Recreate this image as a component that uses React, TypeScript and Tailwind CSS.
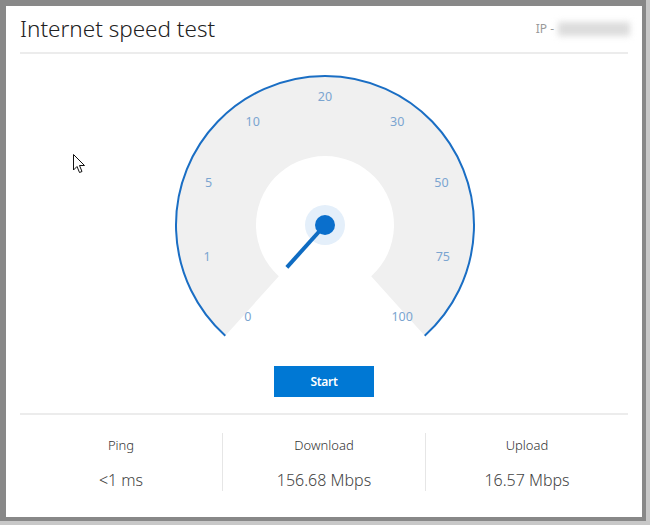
import React from 'react'

const CX = 160
const CY = 164
const R_OUT = 149
const R_IN = 69
const SPAN = 138

const labels = ['0', '1', '5', '10', '20', '30', '50', '75', '100']
// labels sit a little further out near the top than near the ends
const labelRadius = [120, 122, 124, 126, 129, 126, 124, 122, 120]
const LABEL_SPAN = 140

function polar(r: number, deg: number) {
  const a = (deg * Math.PI) / 180
  return { x: CX + r * Math.sin(a), y: CY - r * Math.cos(a) }
}

function Gauge() {
  const oL = polar(R_OUT, -SPAN)
  const oR = polar(R_OUT, SPAN)
  const iL = polar(R_IN, -SPAN)
  const iR = polar(R_IN, SPAN)
  const needle = polar(57, -SPAN)
  const sector = `M ${oL.x} ${oL.y} A ${R_OUT} ${R_OUT} 0 1 1 ${oR.x} ${oR.y} L ${iR.x} ${iR.y} A ${R_IN} ${R_IN} 0 1 0 ${iL.x} ${iL.y} Z`
  const arc = `M ${oL.x} ${oL.y} A ${R_OUT} ${R_OUT} 0 1 1 ${oR.x} ${oR.y}`

  return (
    <svg width="320" height="290" viewBox="0 0 320 290">
      <path d={sector} fill="#f0f0f0" />
      <path d={arc} fill="none" stroke="#1a6ec4" strokeWidth="2" />
      {labels.map((l, i) => {
        const p = polar(labelRadius[i], -LABEL_SPAN + i * ((LABEL_SPAN * 2) / (labels.length - 1)))
        return (
          <text
            key={l}
            x={p.x}
            y={p.y}
            textAnchor="middle"
            dominantBaseline="central"
            fontSize="12.5"
            fill="#7ba5d0"
            fontFamily="'Noto Sans', sans-serif"
          >
            {l}
          </text>
        )
      })}
      <circle cx={CX} cy={CY} r="20" fill="#e4effa" />
      <line x1={CX} y1={CY} x2={needle.x} y2={needle.y} stroke="#0f6cc2" strokeWidth="4" />
      <circle cx={CX} cy={CY} r="10" fill="#0a6fcc" />
    </svg>
  )
}

function Stat({ label, value, last }: { label: string; value: string; last?: boolean }) {
  return (
    <div className={'flex-1 h-[58px] mt-[18px] flex flex-col items-center ' + (last ? '' : 'border-r border-[#e6e6e6]')}>
      <div className="text-[13px] text-[#333] font-light leading-none mt-[6px]">{label}</div>
      <div className="text-[16px] text-[#444] font-light leading-none mt-[20px]">{value}</div>
    </div>
  )
}

export default function App() {
  return (
    <div className="w-[650px] h-[525px] bg-[#c8c8c8] pr-[4px] pb-[4px]" style={{ fontFamily: "'Noto Sans', sans-serif" }}>
      <div className="relative w-full h-full bg-white border-[#888888] border-t-[6px] border-l-[6px] border-r-[4px] border-b-[4px] flex flex-col px-[14px]">
        {/* Header */}
        <div className="h-[48px] flex items-center justify-between border-b-2 border-[#ececec]">
          <h1 className="text-[22.5px] text-[#222] font-light">Internet speed test</h1>
          <div className="flex items-center gap-1 mr-[-2px]">
            <span className="text-[12px] text-[#9a9a9a]">IP -</span>
            <div className="w-[72px] h-[14px] bg-[#dcdcdc] blur-[3px]" />
          </div>
        </div>

        {/* Gauge */}
        <div className="flex justify-center mt-[7px] pl-[2px]">
          <Gauge />
        </div>

        <div className="flex justify-center mt-[15px]">
          <button className="w-[100px] h-[31px] bg-[#0078d4] text-white text-[12px] font-semibold tracking-[-0.3px]">
            Start
          </button>
        </div>

        {/* Stats */}
        <div className="mt-[16px] border-t-2 border-[#ececec] flex flex-1">
          <Stat label="Ping" value="<1 ms" />
          <Stat label="Download" value="156.68 Mbps" />
          <Stat label="Upload" value="16.57 Mbps" last />
        </div>

        {/* Mouse cursor */}
        <svg className="absolute left-[67px] top-[148px]" width="13" height="20" viewBox="0 0 13 20">
          <path d="M0.5 0.5 L0.5 16 L4 12.5 L6.5 18.5 L9 17.5 L6.5 11.5 L11.5 11.5 Z" fill="white" stroke="#111" strokeWidth="1" strokeLinejoin="round" />
        </svg>
      </div>
    </div>
  )
}
